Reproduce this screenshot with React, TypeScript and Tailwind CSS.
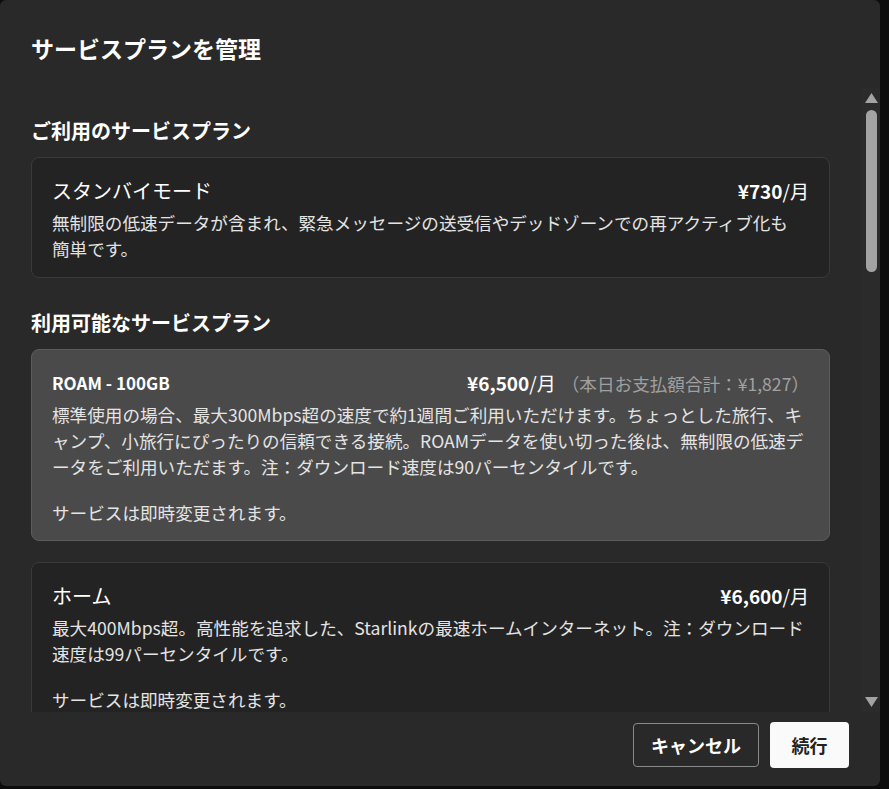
const font = { fontFamily: '"Noto Sans CJK JP", "Noto Sans", sans-serif' };

interface PlanCardProps {
  title: string;
  titleBold?: boolean;
  price: string;
  note?: string;
  description: React.ReactNode;
  footnote?: string;
  selected?: boolean;
}

const PlanCard = ({ title, titleBold, price, note, description, footnote, selected }: PlanCardProps) => (
  <div
    className={
      selected
        ? "rounded-lg border border-[#5c5c5c] bg-[#4a4a4a] px-5 pt-[19px] pb-[14px]"
        : "rounded-lg border border-[#3a3a3a] bg-[#232323] px-5 pt-[19px] pb-[15px]"
    }
  >
    <div className="flex items-center justify-between h-[28px]">
      <span className={titleBold ? "text-[17px] font-bold text-white" : "text-[20px] text-white"}>{title}</span>
      <span className="flex items-baseline gap-[6px]">
        <span className="text-[19px] text-white">
          <span className="font-bold">{price}</span>/月
        </span>
        {note && <span className="text-[17.6px] text-[#a0a0a0]">{note}</span>}
      </span>
    </div>
    <p className="mt-[5px] text-[17.6px] leading-[26px] text-[#e4e4e4]">{description}</p>
    {footnote && <p className="mt-[20px] text-[17.6px] leading-[26px] text-[#e4e4e4]">{footnote}</p>}
  </div>
);

const Arrow = ({ up }: { up?: boolean }) => (
  <svg width="13" height="10" viewBox="0 0 13 10">
    <polygon points={up ? "6.5,0 13,10 0,10" : "0,0 13,0 6.5,10"} fill="#a3a3a3" />
  </svg>
);

export default function App() {
  return (
    <div className="min-h-screen bg-[#0c0c0c]" style={font}>
      <div className="flex h-[786px] w-[880px] flex-col rounded-md bg-[#292929]">
        <div className="h-[88px] shrink-0 px-[31px] pt-[32px]">
          <h1 className="text-[23px] font-bold leading-[32px] text-white">サービスプランを管理</h1>
        </div>

        <div className="flex min-h-0 flex-1">
          <div className="flex-1 overflow-hidden pl-[31px] pr-[32px] pt-[28px]">
            <h2 className="text-[20px] font-bold leading-[30px] text-white">ご利用のサービスプラン</h2>
            <div className="mt-[11px]">
              <PlanCard
                title="スタンバイモード"
                price="¥730"
                description={
                  <>
                    無制限の低速データが含まれ、緊急メッセージの送受信やデッドゾーンでの再アクティブ化も
                    <br />
                    簡単です。
                  </>
                }
              />
            </div>

            <h2 className="mt-[30px] text-[20px] font-bold leading-[30px] text-white">利用可能なサービスプラン</h2>
            <div className="mt-[11px] flex flex-col gap-[21px]">
              <PlanCard
                selected
                titleBold
                title="ROAM - 100GB"
                price="¥6,500"
                note="（本日お支払額合計：¥1,827）"
                description="標準使用の場合、最大300Mbps超の速度で約1週間ご利用いただけます。ちょっとした旅行、キャンプ、小旅行にぴったりの信頼できる接続。ROAMデータを使い切った後は、無制限の低速データをご利用いただます。注：ダウンロード速度は90パーセンタイルです。"
                footnote="サービスは即時変更されます。"
              />
              <PlanCard
                title="ホーム"
                price="¥6,600"
                description="最大400Mbps超。高性能を追求した、Starlinkの最速ホームインターネット。注：ダウンロード速度は99パーセンタイルです。"
                footnote="サービスは即時変更されます。"
              />
            </div>
          </div>

          <div className="flex w-[18px] shrink-0 flex-col items-center bg-[#2b2b2b] pt-[5px] pb-[5px]">
            <Arrow up />
            <div className="mt-[7px] h-[162px] w-[11px] rounded-full bg-[#a3a3a3]" />
            <div className="flex-1" />
            <Arrow />
          </div>
        </div>

        <div className="flex h-[74px] shrink-0 justify-end gap-[11px] px-[31px] pt-[11px]">
          <button className="h-[44px] w-[126px] rounded border border-[#8a8a8a] text-[18px] font-bold text-white">
            キャンセル
          </button>
          <button className="h-[46px] w-[79px] -mt-[1px] rounded bg-[#fafafa] text-[18px] font-bold text-[#222]">
            続行
          </button>
        </div>
      </div>
    </div>
  );
}
